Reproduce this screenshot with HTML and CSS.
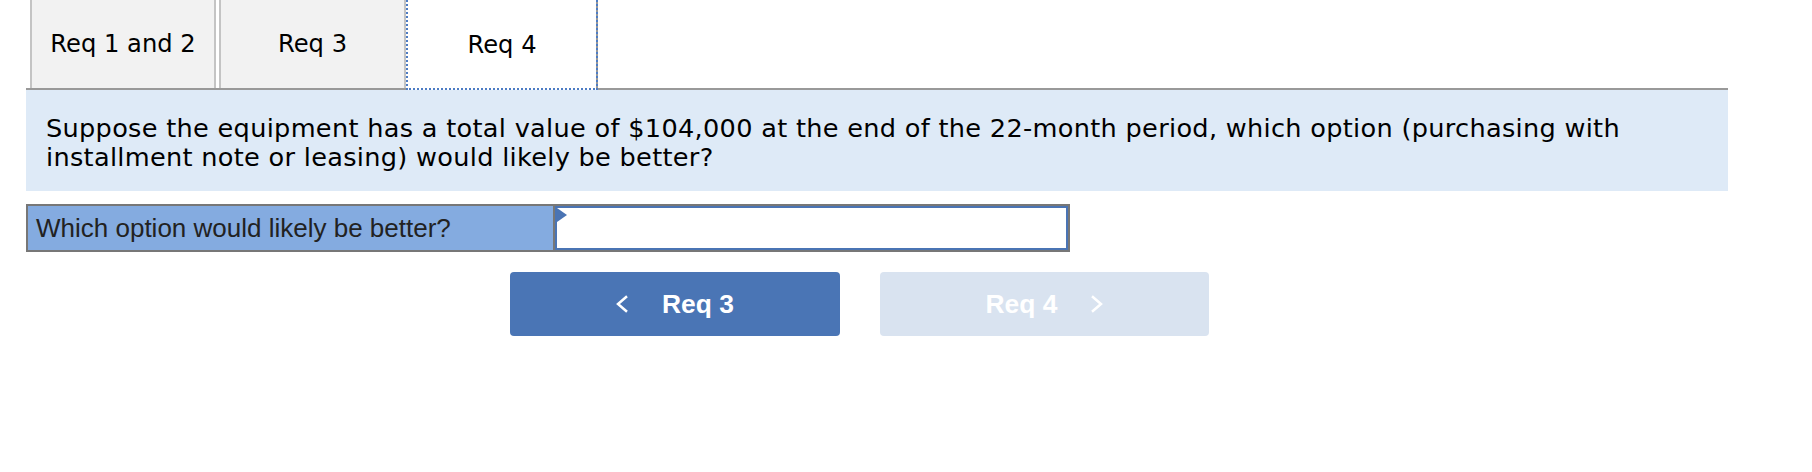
FILE: index.html
```html
<!DOCTYPE html>
<html>
<head>
<meta charset="utf-8">
<link rel="stylesheet" href="styles.css">
</head>
<body>
<div class="page">
  <div class="tabs">
    <div class="tab">Req 1 and 2</div>
    <div class="tab tab-second">Req 3</div>
    <div class="tab active">Req 4</div>
  </div>
  <div class="question">Suppose the equipment has a total value of $104,000 at the end of the 22-month period, which option (purchasing with installment note or leasing) would likely be better?</div>
  <div class="answer">
    <div class="answer-label">Which option would likely be better?</div>
    <div class="answer-input"><span class="flag"></span></div>
  </div>
  <div class="nav">
    <button class="btn prev">
      <svg class="chev" width="12" height="18" viewBox="0 0 12 18"><polyline points="11,1.2 2,9 11,16.8" fill="none" stroke="#fff" stroke-width="2.5"/></svg>
      <span>Req 3</span>
    </button>
    <button class="btn next">
      <span>Req 4</span>
      <svg class="chev" width="12" height="18" viewBox="0 0 12 18"><polyline points="1,1.2 10,9 1,16.8" fill="none" stroke="#fff" stroke-width="2.5"/></svg>
    </button>
  </div>
</div>
</body>
</html>
```
FILE: styles.css
```css
html, body {
  margin: 0;
  padding: 0;
  background: #fff;
}

.page {
  width: 1702px;
  margin-left: 26px;
  margin-top: -4px;
}

.tabs {
  display: flex;
  height: 92px;
  padding-left: 4px;
  border-bottom: 2px solid #999;
}

.tab {
  box-sizing: border-box;
  width: 186px;
  height: 92px;
  padding-top: 4px;
  background: #f2f2f2;
  border-left: 2px solid #c4c4c4;
  border-right: 2px solid #c4c4c4;
  display: flex;
  align-items: center;
  justify-content: center;
  font-family: "DejaVu Sans", Verdana, sans-serif;
  font-size: 24.2px;
  color: #000;
  margin-right: 3px;
}

.tab-second {
  width: 187px;
  margin-right: 0;
}

.tab.active {
  width: 192px;
  height: 94px;
  margin-bottom: -2px;
  background: #fff;
  border-left: none;
  border-right: 2px solid #999;
  outline: 2px dotted #4d7cc4;
  outline-offset: -2px;
  padding-left: 2px;
}

.question {
  background: #deeaf7;
  padding: 24px 20px 19px 20px;
  font-family: "DejaVu Sans", Verdana, sans-serif;
  font-size: 25.6px;
  letter-spacing: 0.3px;
  line-height: 29px;
  color: #000;
}

.answer {
  margin-top: 13px;
  width: 1044px;
  box-sizing: border-box;
  height: 48px;
  display: flex;
  border: 2px solid #777;
}

.answer-label {
  width: 527px;
  box-sizing: border-box;
  background: #84abe0;
  border-right: 2px solid #777;
  padding-left: 8px;
  display: flex;
  align-items: center;
  font-family: "Liberation Sans", Arial, sans-serif;
  font-size: 26px;
  color: #222;
}

.answer-input {
  flex: 1;
  position: relative;
  background: #fff;
  border: 2px solid #4a74b4;
}

.flag {
  position: absolute;
  left: 0;
  top: 0;
  width: 0;
  height: 0;
  border-top: 7px solid transparent;
  border-bottom: 7px solid transparent;
  border-left: 10px solid #4a74b4;
}

.nav {
  margin-top: 20px;
  padding-left: 484px;
  display: flex;
  gap: 40px;
}

.btn {
  width: 330px;
  height: 64px;
  border: none;
  border-radius: 4px;
  display: flex;
  align-items: center;
  justify-content: center;
  gap: 34px;
  font-family: "Liberation Sans", Arial, sans-serif;
  font-weight: bold;
  font-size: 26.4px;
  color: #fff;
  padding: 0;
}

.btn.prev {
  background: #4a75b5;
}

.btn.next {
  width: 329px;
  background: #d9e3f0;
}

.chev {
  display: block;
}
```
